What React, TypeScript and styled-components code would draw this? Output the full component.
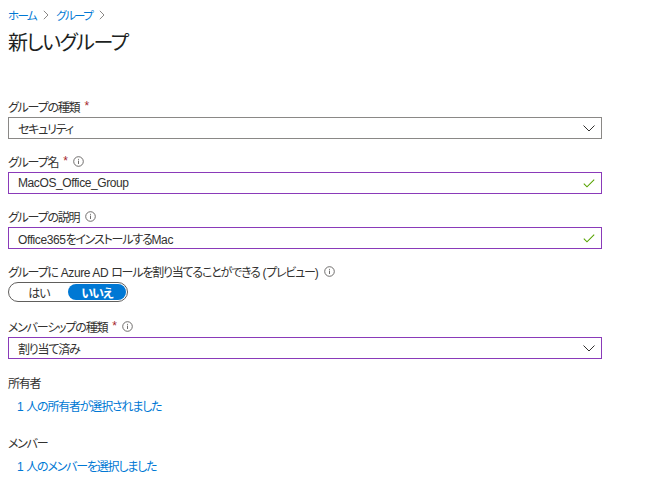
import React, { useState } from 'react';
import styled, { createGlobalStyle } from 'styled-components';

const GlobalStyle = createGlobalStyle`
  html, body {
    margin: 0;
    padding: 0;
    background: #ffffff;
  }
  body {
    font-family: "Liberation Sans", "Noto Sans CJK JP", sans-serif;
    font-feature-settings: "palt" 1;
    color: #323130;
  }
`;

const Page = styled.div`
  width: 667px;
  height: 495px;
  padding: 6px 8px 0 8px;
  box-sizing: border-box;
  overflow: hidden;
`;

const Breadcrumb = styled.nav`
  display: flex;
  align-items: center;
  gap: 7px;
  height: 18px;
  font-size: 11.5px;
`;

const Crumb = styled.a`
  color: #0078d4;
  text-decoration: none;
  letter-spacing: -1.6px;
`;

const Title = styled.h1`
  margin: 5px 0 0 0;
  font-size: 20px;
  font-weight: 400;
  line-height: 28px;
  color: #201f1e;
  letter-spacing: -1.4px;
`;

const Form = styled.div`
  display: flex;
  flex-direction: column;
  margin-top: 40px;
  width: 594px;
`;

const Field = styled.div`
  display: flex;
  flex-direction: column;
  gap: 2px;
  margin-bottom: 13px;
`;

const Label = styled.div`
  display: flex;
  align-items: center;
  gap: 6px;
  height: 18px;
  font-size: 12px;
  color: #323130;
  letter-spacing: -1.2px;
`;

const Latin = styled.span`
  font-size: 12px;
  letter-spacing: -0.4px;
  white-space: pre;
`;

const Required = styled.span`
  color: #a4262c;
  margin-left: -1px;
`;

const Box = styled.div<{ $focused?: boolean }>`
  display: flex;
  align-items: center;
  justify-content: space-between;
  height: 22px;
  box-sizing: border-box;
  border: 1px solid ${p => (p.$focused ? '#8a3ab9' : '#8a8886')};
  padding: 0 6px 0 9px;
  font-size: 12px;
  color: #323130;
  letter-spacing: -1.2px;
`;

const Toggle = styled.div`
  display: flex;
  align-items: center;
  width: 120px;
  height: 20px;
  box-sizing: border-box;
  border: 1px solid #605e5c;
  border-radius: 10px;
  padding: 1px;
  margin-bottom: 2px;
`;

const ToggleOption = styled.div<{ $active?: boolean }>`
  flex: 1;
  height: 100%;
  display: flex;
  align-items: center;
  justify-content: center;
  border-radius: 9px;
  font-size: 12px;
  letter-spacing: -1px;
  font-weight: ${p => (p.$active ? 700 : 400)};
  color: ${p => (p.$active ? '#ffffff' : '#323130')};
  background: ${p => (p.$active ? '#0078d4' : 'transparent')};
`;

const Section = styled.div`
  display: flex;
  flex-direction: column;
  margin-top: 3px;
`;

const SectionTitle = styled.div`
  height: 18px;
  line-height: 18px;
  font-size: 12px;
  letter-spacing: -1.2px;
  color: #323130;
`;

const LinkText = styled.a`
  display: block;
  height: 18px;
  line-height: 18px;
  margin: 5px 0 16px 9px;
  font-size: 12px;
  color: #0078d4;
  text-decoration: none;
  letter-spacing: -1.2px;
`;

const Chevron = () => (
  <svg width="12" height="7" viewBox="0 0 12 7">
    <path d="M0.5 0.5 L6 6 L11.5 0.5" fill="none" stroke="#323130" strokeWidth="1" />
  </svg>
);

const Crumbsep = () => (
  <svg width="6" height="10" viewBox="0 0 6 10">
    <path d="M0.8 0.8 L5 5 L0.8 9.2" fill="none" stroke="#8a8886" strokeWidth="1" />
  </svg>
);

const Check = () => (
  <svg width="12" height="9" viewBox="0 0 12 9">
    <path d="M0.8 4.6 L4 7.8 L11.2 0.6" fill="none" stroke="#57a300" strokeWidth="1.1" />
  </svg>
);

const Info = () => (
  <svg width="11" height="11" viewBox="0 0 11 11">
    <circle cx="5.5" cy="5.5" r="4.8" fill="none" stroke="#605e5c" strokeWidth="0.9" />
    <line x1="5.5" y1="4.6" x2="5.5" y2="8" stroke="#605e5c" strokeWidth="0.9" />
    <circle cx="5.5" cy="3.2" r="0.55" fill="#605e5c" />
  </svg>
);

export default function App() {
  const [assignable, setAssignable] = useState(false);

  return (
    <>
      <GlobalStyle />
      <Page>
        <Breadcrumb>
          <Crumb href="#">ホーム</Crumb>
          <Crumbsep />
          <Crumb href="#">グループ</Crumb>
          <Crumbsep />
        </Breadcrumb>
        <Title>新しいグループ</Title>

        <Form>
          <Field>
            <Label>
              <span>グループの種類</span>
              <Required>*</Required>
            </Label>
            <Box>
              <span>セキュリティ</span>
              <Chevron />
            </Box>
          </Field>

          <Field>
            <Label>
              <span>グループ名</span>
              <Required>*</Required>
              <Info />
            </Label>
            <Box $focused>
              <Latin>MacOS_Office_Group</Latin>
              <Check />
            </Box>
          </Field>

          <Field>
            <Label>
              <span>グループの説明</span>
              <Info />
            </Label>
            <Box $focused>
              <span>
                <Latin>Office365</Latin>をインストールする<Latin>Mac</Latin>
              </span>
              <Check />
            </Box>
          </Field>

          <Field>
            <Label>
              <span>
                グループに<Latin> Azure AD </Latin>ロールを割り当てることができる<Latin> (</Latin>プレビュー<Latin>)</Latin>
              </span>
              <Info />
            </Label>
            <Toggle>
              <ToggleOption $active={assignable} onClick={() => setAssignable(true)}>はい</ToggleOption>
              <ToggleOption $active={!assignable} onClick={() => setAssignable(false)}>いいえ</ToggleOption>
            </Toggle>
          </Field>

          <Field>
            <Label>
              <span>メンバーシップの種類</span>
              <Required>*</Required>
              <Info />
            </Label>
            <Box $focused>
              <span>割り当て済み</span>
              <Chevron />
            </Box>
          </Field>

          <Section>
            <SectionTitle>所有者</SectionTitle>
            <LinkText href="#"><Latin>1 </Latin>人の所有者が選択されました</LinkText>
          </Section>

          <Section>
            <SectionTitle>メンバー</SectionTitle>
            <LinkText href="#"><Latin>1 </Latin>人のメンバーを選択しました</LinkText>
          </Section>
        </Form>
      </Page>
    </>
  );
}
